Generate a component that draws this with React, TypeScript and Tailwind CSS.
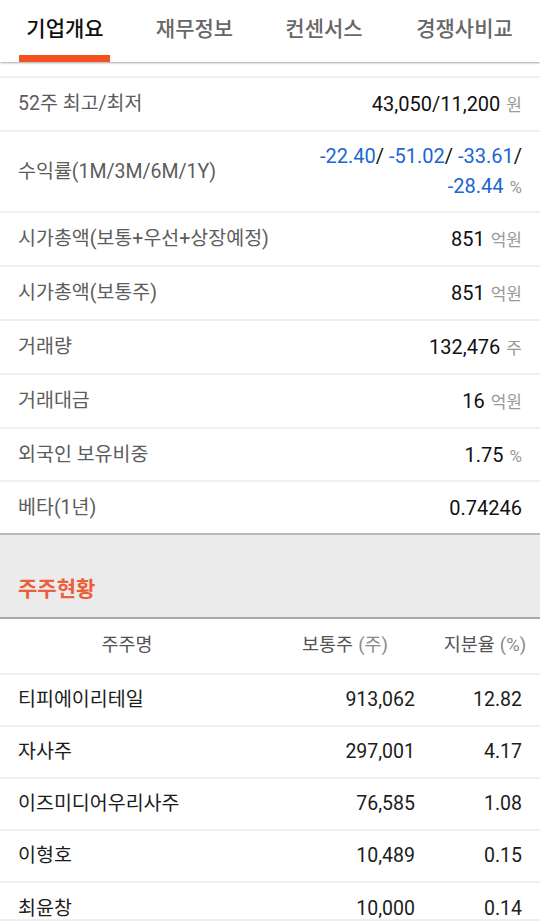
import React from 'react';

const tabs = [
  { name: '기업개요', width: 'w-[130px]', active: true },
  { name: '재무정보', width: 'w-[129px]', active: false },
  { name: '컨센서스', width: 'w-[130px]', active: false },
  { name: '경쟁사비교', width: 'w-[151px]', active: false },
];

const summary = [
  { label: '시가총액(보통+우선+상장예정)', value: '851', unit: '억원' },
  { label: '시가총액(보통주)', value: '851', unit: '억원' },
  { label: '거래량', value: '132,476', unit: '주' },
  { label: '거래대금', value: '16', unit: '억원' },
  { label: '외국인 보유비중', value: '1.75', unit: '%', h: 'h-[53px]' },
];

const holders = [
  { name: '티피에이리테일', shares: '913,062', ratio: '12.82' },
  { name: '자사주', shares: '297,001', ratio: '4.17' },
  { name: '이즈미디어우리사주', shares: '76,585', ratio: '1.08' },
  { name: '이형호', shares: '10,489', ratio: '0.15' },
];

function Unit({ children }: { children: React.ReactNode }) {
  return <span className="ml-[6px] text-[17px] text-[#9a9a9a]">{children}</span>;
}

function Row({ label, children, h = 'h-[54px]', last = false }: { label: string; children: React.ReactNode; h?: string; last?: boolean }) {
  return (
    <div className={`flex ${h} items-center justify-between pl-[18px] pr-[18px] ${last ? '' : 'border-b-2 border-[#efefef]'}`}>
      <span className="text-[19.5px] text-[#5c5c5c]">{label}</span>
      <div className="text-right text-[20px] text-[#111]">{children}</div>
    </div>
  );
}

export default function App() {
  return (
    <div className="w-[540px] h-[921px] overflow-hidden bg-white font-[Roboto,'Noto_Sans_CJK_KR',sans-serif]">
      {/* tabs */}
      <div className="relative z-10 flex h-[62px] bg-white shadow-[0_1px_2px_rgba(0,0,0,0.35)]">
        {tabs.map((t) => (
          <div key={t.name} className={`flex ${t.width} flex-col`}>
            <div className={`flex flex-1 items-center justify-center pt-[4px] text-[21px] font-medium ${t.active ? 'text-[#111]' : 'text-[#676767]'}`}>
              {t.name}
            </div>
            <div className={`ml-[19px] h-[7px] w-[91px] ${t.active ? 'bg-[#f4511e]' : ''}`} />
          </div>
        ))}
      </div>

      <div className="h-[14px]" />

      {/* summary */}
      <div className="border-t-2 border-[#efefef]">
        <Row label="52주 최고/최저">
          43,050/11,200<Unit>원</Unit>
        </Row>
        <Row label="수익률(1M/3M/6M/1Y)" h="h-[81px]">
          <div className="leading-[30px]">
            <span className="text-[#1a66d2]">-22.40</span>/ <span className="text-[#1a66d2]">-51.02</span>/{' '}
            <span className="text-[#1a66d2]">-33.61</span>/
          </div>
          <div className="leading-[30px]">
            <span className="text-[#1a66d2]">-28.44</span>
            <Unit>%</Unit>
          </div>
        </Row>
        {summary.map((s) => (
          <Row key={s.label} label={s.label} h={s.h}>
            {s.value}
            <Unit>{s.unit}</Unit>
          </Row>
        ))}
        <Row label="베타(1년)" h="h-[51px]" last>
          0.74246
        </Row>
      </div>

      {/* section title */}
      <div className="flex h-[86px] items-end border-t-2 border-b-2 border-t-[#b9b9b9] border-b-[#a9a9a9] bg-[#ebebeb] pb-[14px] pl-[18px]">
        <span className="text-[21px] font-bold leading-[28px] text-[#ec5e3c]">주주현황</span>
      </div>

      {/* shareholders */}
      <div className="grid h-[56px] grid-cols-[254px_182px_98px] items-center border-b-2 border-[#efefef] text-[18.5px] text-[#555]">
        <span className="text-center">주주명</span>
        <span className="text-center">
          보통주<span className="ml-[5px] text-[#8a8a8a]">(주)</span>
        </span>
        <span className="text-center">
          지분율<span className="ml-[5px] text-[#8a8a8a]">(%)</span>
        </span>
      </div>
      {holders.map((r) => (
        <div key={r.name} className="grid h-[52px] grid-cols-[254px_182px_98px] items-center border-b-2 border-[#efefef] text-[19.5px] text-[#1c1c1c]">
          <span className="pl-[18px]">{r.name}</span>
          <span className="pr-[21px] text-right">{r.shares}</span>
          <span className="pr-[12px] text-right">{r.ratio}</span>
        </div>
      ))}
      <div className="grid h-[38px] grid-cols-[254px_182px_98px] items-start border-b-2 border-[#efefef] pt-[12px] text-[19.5px] leading-[28px] text-[#1c1c1c]">
        <span className="pl-[18px]">최윤창</span>
        <span className="pr-[21px] text-right">10,000</span>
        <span className="pr-[12px] text-right">0.14</span>
      </div>
    </div>
  );
}
